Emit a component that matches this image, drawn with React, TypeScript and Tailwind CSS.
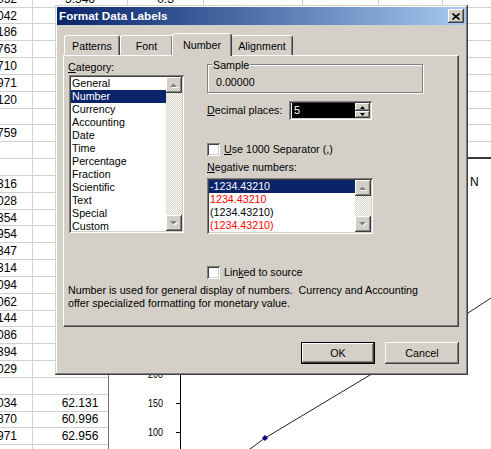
import React from 'react';

const raised = 'shadow-[inset_-1px_-1px_0_#404040,inset_1px_1px_0_#ffffff,inset_-2px_-2px_0_#808080]';
const sunken = 'shadow-[inset_1px_1px_0_#808080,inset_-1px_-1px_0_#ffffff,inset_2px_2px_0_#404040,inset_-2px_-2px_0_#d4d0c8]';

const rows: [string, string, string][] = [
  ['8.052', '3.546', '0.3'],
  ['1.042', '', ''],
  ['1.186', '', ''],
  ['2.763', '', ''],
  ['2.710', '', ''],
  ['1.971', '', ''],
  ['2.120', '', ''],
  ['', '', ''],
  ['2.759', '', ''],
  ['', '', ''],
  ['', '', ''],
  ['1.316', '', ''],
  ['2.028', '', ''],
  ['3.354', '', ''],
  ['0.954', '', ''],
  ['1.347', '', ''],
  ['3.314', '', ''],
  ['3.094', '', ''],
  ['2.062', '', ''],
  ['1.144', '', ''],
  ['3.086', '', ''],
  ['3.394', '', ''],
  ['3.029', '', ''],
  ['', '', ''],
  ['3.034', '62.131', ''],
  ['3.870', '60.996', ''],
  ['1.971', '62.956', ''],
  ['', '', ''],
];

const categories = ['General', 'Number', 'Currency', 'Accounting', 'Date', 'Time', 'Percentage', 'Fraction', 'Scientific', 'Text', 'Special', 'Custom'];

const negatives = [
  { text: '-1234.43210', cls: 'bg-[#0a246a] text-white' },
  { text: '1234.43210', cls: 'text-[#ff0000]' },
  { text: '(1234.43210)', cls: 'text-black' },
  { text: '(1234.43210)', cls: 'text-[#ff0000]' },
];

function Sheet() {
  return (
    <div className="flex flex-col mt-[-9.2px] text-[12px] text-black">
      {rows.map((r, i) => (
        <div key={i} className="flex h-[16.83px] shrink-0 border-b border-[#d0d0d0]">
          <div className="w-[33px] flex justify-end items-center overflow-hidden border-r border-[#d0d0d0] pr-[15px] whitespace-nowrap">{r[0]}</div>
          <div className="w-[95px] flex justify-center items-center border-r border-[#d0d0d0] whitespace-nowrap">{r[1]}</div>
          <div className="w-[76px] flex justify-center items-center border-r border-[#d0d0d0] whitespace-nowrap">{r[2]}</div>
          <div className="w-[99px] border-r border-[#d0d0d0]" />
          <div className="w-[76px] border-r border-[#d0d0d0]" />
          <div className="w-[64px] border-r border-[#d0d0d0]" />
          <div className="flex-1" />
        </div>
      ))}
    </div>
  );
}

function Chart() {
  const ticks = [
    { y: 157, label: '300' },
    { y: 186, label: '250' },
    { y: 215, label: '200' },
    { y: 244, label: '150' },
    { y: 273, label: '100' },
  ];
  return (
    <div className="absolute left-[108px] top-[157px] w-[400px] h-[300px] bg-white border-t-2 border-l border-t-[#3a3a3a] border-l-[#707070]">
      <svg className="absolute left-0 top-0" width="400" height="300" fontFamily="Liberation Sans, Arial, sans-serif">
        <line x1="71.5" y1="40" x2="71.5" y2="300" stroke="#000" strokeWidth="1" />
        {ticks.map((t) => (
          <g key={t.label}>
            <line x1="67" y1={t.y + 0.5} x2="72" y2={t.y + 0.5} stroke="#000" strokeWidth="1" />
            <text x="54" y={t.y + 4} fontSize="11" textAnchor="end" textLength="15" lengthAdjust="spacingAndGlyphs">{t.label}</text>
          </g>
        ))}
        <polyline points="130,297 141,290 156,279 261,216 359,154 382,139 420,115" fill="none" stroke="#222" strokeWidth="1" />
        <polygon points="156,276 159,279 156,282 153,279" fill="#000080" />
        <text x="361" y="27" fontSize="12">N</text>
      </svg>
    </div>
  );
}

function Arrow({ up, disabled }: { up: boolean; disabled?: boolean }) {
  const pts = up ? '0,4 3.5,0.5 7,4' : '0,0 3.5,3.5 7,0';
  return (
    <svg width="8" height="5" viewBox="0 0 8 5">
      {disabled && <polygon points={pts} fill="#ffffff" transform="translate(1,1)" />}
      <polygon points={pts} fill={disabled ? '#808080' : '#000'} />
    </svg>
  );
}

function ScrollBar() {
  return (
    <div className="w-[16px] h-full flex flex-col shrink-0">
      <div className={`h-[16px] shrink-0 bg-[#d4d0c8] flex items-center justify-center ${raised}`}>
        <Arrow up disabled />
      </div>
      <div className="flex-1 bg-[repeating-conic-gradient(#ffffff_0_25%,#d4d0c8_0_50%)] bg-[length:2px_2px]" />
      <div className={`h-[16px] shrink-0 bg-[#d4d0c8] flex items-center justify-center ${raised}`}>
        <Arrow up={false} disabled />
      </div>
    </div>
  );
}

function CheckBox() {
  return <div className={`w-[13px] h-[13px] shrink-0 bg-white ${sunken}`} />;
}

function Tab({ label, cls }: { label: string; cls: string }) {
  return (
    <div className={`h-[20px] flex items-center justify-center pt-[2px] border-t border-l border-white border-r border-r-[#404040] rounded-t-[3px] shadow-[inset_-1px_0_0_#808080] ${cls}`}>
      {label}
    </div>
  );
}

function Panel() {
  return (
    <div className="h-[272px] border border-t-white border-l-white border-r-[#404040] border-b-[#404040] shadow-[inset_-1px_-1px_0_#808080] pt-[5px] pl-[4px] flex flex-col">
      <div className="flex">
        <div className="w-[120px] flex flex-col">
          <div className="h-[13px]"><span className="underline">C</span>ategory:</div>
          <div className={`ml-[1px] mt-[1px] w-[115px] h-[158px] p-[2px] bg-white flex ${sunken}`}>
            <div className="flex-1 flex flex-col overflow-hidden">
              {categories.map((c) => (
                <div key={c} className={`h-[13px] shrink-0 pl-px whitespace-nowrap ${c === 'Number' ? 'bg-[#0a246a] text-white' : ''}`}>{c}</div>
              ))}
            </div>
            <ScrollBar />
          </div>
        </div>
        <div className="ml-[19px] w-[216px] flex flex-col">
          <div className="relative mt-[3px] h-[29px] w-[216px] border border-[#808080] shadow-[inset_1px_1px_0_#ffffff,1px_1px_0_#ffffff] pl-[8px] pt-[11px]">
            <span className="absolute left-[4px] top-[-6px] px-[1px] bg-[#d4d0c8]">Sample</span>
            <div className="h-[13px]">0.00000</div>
          </div>
          <div className="mt-[8px] h-[19px] flex items-center">
            <div className="w-[82px]"><span className="underline">D</span>ecimal places:</div>
            <div className={`w-[83px] h-[19px] p-[2px] bg-white flex ${sunken}`}>
              <div className="flex-1 ml-[1px] bg-black text-white text-[11px] leading-[15px] pl-[2px]">5</div>
              <div className="w-[15px] flex flex-col">
                <div className={`h-[8px] bg-[#d4d0c8] flex items-center justify-center ${raised}`}>
                  <svg width="5" height="3" viewBox="0 0 5 3"><polygon points="0,3 2.5,0 5,3" fill="#000" /></svg>
                </div>
                <div className={`h-[7px] bg-[#d4d0c8] flex items-center justify-center ${raised}`}>
                  <svg width="5" height="3" viewBox="0 0 5 3"><polygon points="0,0 2.5,3 5,0" fill="#000" /></svg>
                </div>
              </div>
            </div>
          </div>
          <div className="mt-[23px] h-[13px] flex items-center gap-[4px]">
            <CheckBox />
            <span><span className="underline">U</span>se 1000 Separator (,)</span>
          </div>
          <div className="mt-[5px] h-[13px]"><span className="underline">N</span>egative numbers:</div>
          <div className={`mt-[4px] w-[166px] h-[56px] p-[2px] bg-white flex ${sunken}`}>
            <div className="flex-1 flex flex-col overflow-hidden">
              {negatives.map((n, i) => (
                <div key={i} className={`h-[13px] shrink-0 pl-px whitespace-nowrap ${n.cls}`}>{n.text}</div>
              ))}
            </div>
            <ScrollBar />
          </div>
        </div>
      </div>
      <div className="ml-[139px] mt-[32px] h-[13px] flex items-center gap-[4px]">
        <CheckBox />
        <span>Lin<span className="underline">k</span>ed to source</span>
      </div>
      <div className="mt-[5px] whitespace-pre">
        {'Number is used for general display of numbers.  Currency and Accounting\noffer specialized formatting for monetary value.'}
      </div>
    </div>
  );
}

function Dialog() {
  return (
    <div className="absolute left-[55px] top-[5px] w-[413px] h-[370px] bg-[#d4d0c8] p-[2px] shadow-[inset_-1px_-1px_0_#404040,inset_1px_1px_0_#d4d0c8,inset_-2px_-2px_0_#808080,inset_2px_2px_0_#ffffff] text-[10.7px] leading-[13px] text-black flex flex-col">
      <div className="h-[18px] shrink-0 flex items-center justify-between bg-linear-to-r from-[#0a246a] to-[#a6caf0] px-[2px]">
        <span className="text-white font-bold text-[11.7px] leading-[14px]">Format Data Labels</span>
        <div className={`w-[16px] h-[14px] bg-[#d4d0c8] flex items-center justify-center ${raised}`}>
          <svg width="8" height="7" viewBox="0 0 8 7">
            <path d="M0.5 0.5 L7.5 6.5 M7.5 0.5 L0.5 6.5" stroke="#000" strokeWidth="1.6" />
          </svg>
        </div>
      </div>
      <div className="pl-[6px] pr-[7px]">
        <div className="mt-[8px] h-[22px] pl-[1px] flex items-end">
          <Tab label="Patterns" cls="w-[56px]" />
          <Tab label="Font" cls="w-[53px]" />
          <div className="relative z-10 ml-[-1px] mb-[-1px] w-[60px] h-[23px] bg-[#d4d0c8] flex items-start justify-center pt-[5px] border-t border-l border-white border-r border-r-[#404040] rounded-t-[3px] shadow-[inset_-1px_0_0_#808080]">
            Number
          </div>
          <Tab label="Alignment" cls="ml-[-1px] w-[62px]" />
        </div>
        <Panel />
      </div>
      <div className="mt-[15px] pr-[7px] flex justify-end gap-[10px]">
        <div className="w-[74px] h-[22px] border border-black">
          <div className={`w-full h-full flex items-center justify-center ${raised}`}>OK</div>
        </div>
        <div className={`w-[74px] h-[22px] flex items-center justify-center ${raised}`}>Cancel</div>
      </div>
    </div>
  );
}

export default function App() {
  return (
    <div className="relative w-[491px] h-[449px] overflow-hidden bg-white font-['Liberation_Sans',Arial,sans-serif]">
      <Sheet />
      <Chart />
      <Dialog />
    </div>
  );
}
